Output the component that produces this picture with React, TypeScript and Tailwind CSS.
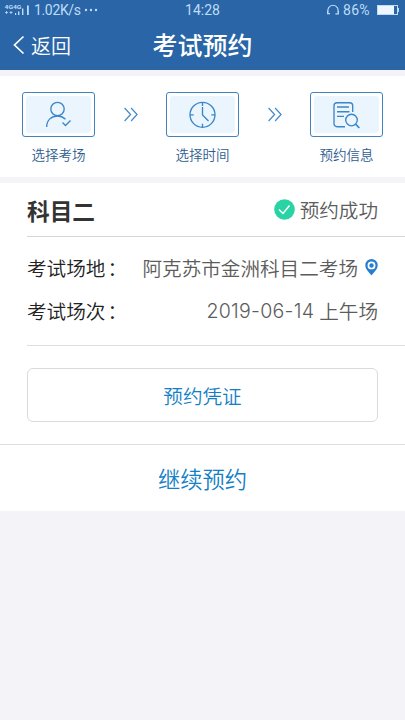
import React from "react";

const line = { fill: "none", stroke: "#3b86c8", strokeWidth: 1.35 } as const;

function StatusBar() {
  return (
    <div className="grid h-5 grid-cols-[1fr_auto_1fr] items-center text-[#bfdcf6]">
      <div className="flex items-center">
        <svg width="34" height="20" className="shrink-0" fill="currentColor">
          <text x="4.5" y="9" fontSize="6" fontWeight="700" textLength="17" lengthAdjust="spacingAndGlyphs" fontFamily="Roboto">4G4G</text>
          <path d="M5 12.500h3M9.500 12.500h3M6.500 11v3M11 11v3" stroke="currentColor" strokeWidth=".8" />
          <path d="M15 13h1.200v2H15zM18 11.500h1.400V15H18zM22 8.500h1.400V15H22zM27 5.500h1.800V15H27z" />
        </svg>
        <span className="w-[47px] whitespace-nowrap text-[14px] leading-5 tracking-[-0.35px]">1.02K/s</span>
        <svg width="19" height="20" className="shrink-0" fill="currentColor">
          <circle cx="5" cy="10" r="1.2" /><circle cx="10" cy="10" r="1.2" /><circle cx="15" cy="10" r="1.2" />
        </svg>
      </div>
      <span className="text-[14px] leading-5">14:28</span>
      <div className="flex items-center justify-end pr-[5px]">
        <svg width="14" height="14" viewBox="0 0 14 14" fill="none" stroke="currentColor" strokeWidth="1.1">
          <path d="M2.200 9.500A5.200 5.200 0 1 1 11.800 9.500" />
          <path d="M1.600 8v2.600h2.400M12.400 8v2.900h-3" />
        </svg>
        <span className="ml-[3px] w-[29px] whitespace-nowrap text-[14px] leading-5 tracking-[0.3px]">86%</span>
        <svg width="24" height="12" className="ml-1" viewBox="0 0 24 12">
          <rect x="1.500" y="1.500" width="20" height="9" fill="none" stroke="currentColor" />
          <path d="M2 2h16v8H2z" fill="#eef7ff" />
          <path d="M22.500 4v4" stroke="currentColor" />
        </svg>
      </div>
    </div>
  );
}

function PersonIcon() {
  return (
    <svg width="73" height="45" {...line}>
      <circle cx="35.500" cy="17" r="6.700" />
      <path d="M24.700 35c0-7 4.800-11 10.800-11 3.400 0 5.800 1.200 8 3.200M40.500 30.500l3 3 5-5" />
    </svg>
  );
}

function ClockIcon() {
  return (
    <svg width="73" height="45" {...line}>
      <circle cx="36.500" cy="22.800" r="12.500" />
      <path d="M36.500 10.300v3.700M36.500 31.700v3.600M24 22.800h3.700M45.300 22.800H49M36.500 15v8l6 6" />
    </svg>
  );
}

function DocumentIcon() {
  return (
    <svg width="73" height="45" {...line}>
      <path d="M35 34.700h-8a3 3 0 0 1-3-3v-18a3 3 0 0 1 3-3h12.700a3 3 0 0 1 3 3V20M27 15h12M27 19.700h12.500M27 24.300h7" />
      <circle cx="41.500" cy="28" r="5.800" />
      <path d="M45.500 32l3.800 4" strokeWidth="1.800" />
    </svg>
  );
}

function Step({ label, children }: { label: string; children: React.ReactNode }) {
  return (
    <div className="flex w-[73px] flex-col items-center">
      <div className="grid h-[45px] w-[73px] rounded-[3px] border border-[#3f83bf]">
        <div className="m-[3px] rounded-[3px] bg-[#eaf5fe]">
          <div className="-m-1">{children}</div>
        </div>
      </div>
      <span className="mt-[8px] text-[13.5px] leading-5 font-[350] whitespace-nowrap text-[#2d5c90]">{label}</span>
    </div>
  );
}

function Chevrons() {
  return (
    <svg width="14" height="15" className="mt-[15px]" fill="none" stroke="#4289c8" strokeWidth="1.2">
      <path d="M.6 1l6 6.500-6 6.500M7.100 1l6 6.500-6 6.500" />
    </svg>
  );
}

export default function App() {
  return (
    <div className="h-[720px] w-[405px] overflow-hidden bg-[#f3f3f8] font-[Roboto,'Noto_Sans_CJK_SC',sans-serif]">
      <header className="h-[70px] bg-[#2a66a7]">
        <StatusBar />
        <div className="grid h-[50px] grid-cols-[1fr_auto_1fr] items-center text-white">
          <div className="flex items-center pl-[13px]">
            <svg width="12" height="20" fill="none" stroke="currentColor" strokeWidth="1.700"><path d="M10.500 1.500L1.500 10l9 8.500" /></svg>
            <span className="ml-[6px] pt-[3px] text-[20px] leading-7 font-[350]">返回</span>
          </div>
          <h1 className="pt-[3px] text-[25px] leading-8 font-medium">考试预约</h1>
        </div>
      </header>

      <section className="mt-[6px] flex h-[101px] items-start justify-between bg-white px-[22px] pt-[16px]">
        <Step label="选择考场"><PersonIcon /></Step>
        <Chevrons />
        <Step label="选择时间"><ClockIcon /></Step>
        <Chevrons />
        <Step label="预约信息"><DocumentIcon /></Step>
      </section>

      <main className="mt-[6px] h-[328px] bg-white text-[19.6px] font-[350] text-[#5c5c5c]">
        <div className="ml-[27px] flex h-[54px] items-center justify-between border-b border-[#d6d6d6] pr-[27px]">
          <h2 className="pt-[7px] text-[22.700px] font-bold text-[#333]">科目二</h2>
          <div className="flex items-center gap-[5px]">
            <svg width="21" height="21"><circle cx="10.500" cy="10.500" r="10.300" fill="#29d3a3" /><path d="M5 10.500l4 4 6.500-8" fill="none" stroke="white" strokeWidth="1.500" /></svg>
            <span className="pt-1">预约成功</span>
          </div>
        </div>
        <div className="ml-[27px] h-[109px] border-b border-[#dedede] pt-[9px] pr-[27px]">
          <div className="flex h-[43px] items-center justify-between">
            <span className="pt-1 text-[#222]">考试场地<span className="ml-[2px]">：</span></span>
            <div className="flex items-center gap-[7px]">
              <span className="pt-1">阿克苏市金洲科目二考场</span>
              <svg width="13" height="17" viewBox="0 0 13 17"><path d="M6.500 0a6.200 6.200 0 0 1 6.200 6.200c0 4.300-4 7-6.200 10.300C4.300 13.200.3 10.500.3 6.200A6.200 6.200 0 0 1 6.500 0z" fill="#287dce" /><circle cx="6.500" cy="6.400" r="3.100" fill="#287dce" stroke="white" strokeWidth="1.700" /></svg>
            </div>
          </div>
          <div className="flex h-[43px] items-center justify-between">
            <span className="pt-1 text-[#222]">考试场次<span className="ml-[2px]">：</span></span>
            <div className="flex items-center gap-[5px]">
              <span className="pt-[2px] font-[Inter] text-[19.600px] font-[350] tracking-[0.25px]">2019-06-14</span>
              <span className="pt-1">上午场</span>
            </div>
          </div>
        </div>
        <div className="h-[99px] border-b border-[#dedede] px-[27px] pt-[22px]">
          <button className="h-[54px] w-full rounded-[6px] border border-[#dadada] pt-[5px] text-[#147fc6]">预约凭证</button>
        </div>
        <button className="h-[66px] w-full pt-[5px] text-[22.300px] text-[#147fc6]">继续预约</button>
      </main>
    </div>
  );
}
